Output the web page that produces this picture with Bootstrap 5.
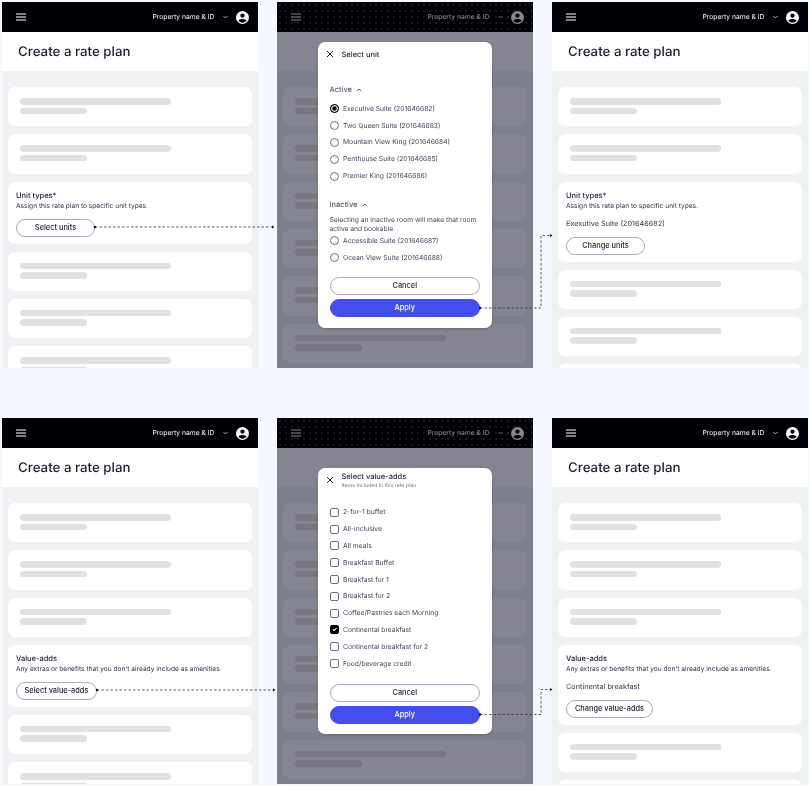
<!doctype html>
<html lang="en">
<head>
  <meta charset="utf-8" />
  <meta name="viewport" content="width=device-width, initial-scale=1" />
  <title>Create a rate plan</title>
  <link href="https://cdn.jsdelivr.net/npm/bootstrap@5.3.6/dist/css/bootstrap.min.css" rel="stylesheet" />
  <style>
    body {
      background-color: #f5f8fe;
      font-family: Inter, "Noto Sans", sans-serif;
      color: #24243a;
      overflow: hidden;
      text-rendering: geometricPrecision;
    }
    .board {
      position: relative;
      display: grid;
      grid-template-columns: repeat(3, 256px);
      grid-auto-rows: 366px;
      column-gap: 19px;
      row-gap: 50px;
      width: 809px;
      height: 786px;
      padding: 2px 0 0 2px;
      overflow: hidden;
      will-change: transform;
    }
    .screen {
      position: relative;
      background-color: #f0f1f3;
      overflow: hidden;
    }
    .topbar {
      height: 30px;
      padding: 0 9.5px 0 14px;
      background-color: #000006;
      color: #fff;
      font-size: 6.75px;
    }
    .topbar-off {
      background-image: radial-gradient(rgba(255, 255, 255, .3) .5px, transparent .8px);
      background-size: 6px 6px;
    }
    .topbar-off > * { opacity: .52; }
    .page-head {
      height: 39px;
      padding: 3px 0 0 16px;
      background-color: #fff;
      font-size: 13.3px;
      font-weight: 500;
      color: #1b1b2d;
    }
    .stack {
      padding: 16px 6px 0;
      gap: 8px;
    }
    .tile {
      border-radius: 7px;
      background-color: #fff;
      flex-shrink: 0;
    }
    .tile-skel {
      height: 39.33px;
      padding: 11px 12px;
      gap: 3px;
    }
    .bar-long, .bar-short {
      height: 6.5px;
      border-radius: 4px;
      background-color: #e1e1e2;
    }
    .bar-long { width: 151px; }
    .bar-short { width: 67px; }
    .tile-form { padding: 8px 8px 7px; }
    .tile-short { height: 62px; }
    .field-name { font-size: 7.5px; font-weight: 500; line-height: 11px; }
    .field-help { font-size: 6.6px; line-height: 10px; margin: .5px 0 7.5px; color: #34344a; }
    .field-value { font-size: 7.3px; line-height: 10px; margin-bottom: 8px; color: #34344a; }
    .pill {
      display: flex;
      align-items: center;
      justify-content: center;
      height: 18px;
      padding: 0;
      border: 1px solid #aaa8bc;
      border-radius: 9px;
      background-color: #fff;
      color: #1e1e30;
      font-size: 7.4px;
      font-weight: 500;
    }
    .pill-apply {
      border-color: #434ef0;
      background-color: #434ef0;
      color: #fff;
    }
    .w-units { width: 79px; }
    .w-value { width: 81px; }
    .w-change { width: 87px; }
    .dim {
      position: absolute;
      inset: 30px 0 0;
      background-color: rgba(30, 30, 52, .54);
    }
    .sheet {
      position: absolute;
      left: 41px;
      width: 173.5px;
      padding: 0 11.5px;
      border-radius: 7px;
      background-color: #fff;
      color: #45455a;
      box-shadow: 0 1px 3px rgba(0, 0, 0, .2);
    }
    .sheet-units { top: 40px; height: 286px; }
    .sheet-adds { top: 50px; height: 266px; }
    .sheet-head {
      position: relative;
      margin-left: 12px;
      font-size: 7.5px;
      font-weight: 500;
      color: #2a2a3e;
    }
    .sheet-units .sheet-head { padding-top: 7px; height: 42px; line-height: 11px; }
    .sheet-adds .sheet-head { padding-top: 3px; height: 36px; line-height: 11.5px; }
    .sheet-sub { font-size: 5.2px; font-weight: 400; line-height: 7px; color: #6d6d7e; }
    .x-mark {
      position: absolute;
      left: -16px;
      width: 8px;
      height: 8px;
    }
    .sheet-units .x-mark { top: 8px; }
    .sheet-adds .x-mark { top: 7.5px; }
    .group-label {
      height: 11px;
      line-height: 11px;
      margin-bottom: 5.5px;
      font-size: 7.6px;
      gap: 4px;
    }
    .group-gap { margin-top: 15px; }
    .group-note { font-size: 6.7px; line-height: 8.7px; margin: 0 0 -1px; width: 150px; }
    .choice {
      height: 16.8px;
      gap: 4.5px;
      font-size: 6.75px;
    }
    .choice .form-check-input {
      width: 9px;
      height: 9px;
      margin: 0;
      flex-shrink: 0;
      border: 1px solid #6f6e85;
      background-color: #fff;
      box-shadow: none;
    }
    .choice input[type=checkbox] { border-radius: 2px; }
    .choice .form-check-input:checked {
      border-color: #000006;
      background-color: #000006;
    }
    .choice input[type=radio]:checked {
      background-color: #000006;
      background-image: none;
      box-shadow: inset 0 0 0 1.2px #fff;
    }
    .sheet-actions {
      position: absolute;
      left: 11.5px;
      right: 11.5px;
      gap: 4px;
    }
    .sheet-units .sheet-actions { top: 235px; }
    .sheet-adds .sheet-actions { top: 216px; }
    .wires {
      position: absolute;
      inset: 0;
      pointer-events: none;
    }
  </style>
</head>
<body>
  <div class="board">

    <!-- baris atas: unit -->
    <section class="screen">
      <div class="topbar d-flex align-items-center">
        <svg width="10" height="8" viewBox="0 0 10 8"><path d="M0 1h10M0 4h10M0 7h10" stroke="#fff" stroke-width="1"/></svg>
        <span class="ms-auto">Property name &amp; ID</span>
        <svg class="ms-2" width="5" height="4" viewBox="0 0 5 4"><path d="M.5 1l2 2 2-2" fill="none" stroke="#fff" stroke-width=".7"/></svg>
        <svg class="ms-2" width="13" height="13" viewBox="0 0 24 24"><path fill="#fff" d="M12 0a12 12 0 1 0 0 24 12 12 0 0 0 0-24zm0 4.500a4 4 0 1 1 0 8 4 4 0 0 1 0-8zm0 17c-3.200 0-6-1.500-7.700-3.900C5.300 15.700 9 14.600 12 14.600s6.700 1.100 7.700 3c-1.700 2.400-4.500 3.900-7.700 3.900z"/></svg>
      </div>
      <div class="page-head d-flex align-items-center">Create a rate plan</div>
      <div class="stack d-flex flex-column">
        <div class="tile tile-skel d-flex flex-column"><div class="bar-long"></div><div class="bar-short"></div></div>
        <div class="tile tile-skel d-flex flex-column"><div class="bar-long"></div><div class="bar-short"></div></div>
        <div class="tile tile-form tile-short">
          <div class="field-name">Unit types*</div>
          <div class="field-help">Assign this rate plan to specific unit types.</div>
          <button class="pill w-units" type="button">Select units</button>
        </div>
        <div class="tile tile-skel d-flex flex-column"><div class="bar-long"></div><div class="bar-short"></div></div>
        <div class="tile tile-skel d-flex flex-column"><div class="bar-long"></div><div class="bar-short"></div></div>
        <div class="tile tile-skel d-flex flex-column"><div class="bar-long"></div><div class="bar-short"></div></div>
      </div>
    </section>

    <section class="screen">
      <div class="topbar topbar-off d-flex align-items-center">
        <svg width="10" height="8" viewBox="0 0 10 8"><path d="M0 1h10M0 4h10M0 7h10" stroke="#fff" stroke-width="1"/></svg>
        <span class="ms-auto">Property name &amp; ID</span>
        <svg class="ms-2" width="5" height="4" viewBox="0 0 5 4"><path d="M.5 1l2 2 2-2" fill="none" stroke="#fff" stroke-width=".7"/></svg>
        <svg class="ms-2" width="13" height="13" viewBox="0 0 24 24"><path fill="#fff" d="M12 0a12 12 0 1 0 0 24 12 12 0 0 0 0-24zm0 4.500a4 4 0 1 1 0 8 4 4 0 0 1 0-8zm0 17c-3.200 0-6-1.500-7.700-3.900C5.300 15.700 9 14.600 12 14.600s6.700 1.100 7.700 3c-1.700 2.400-4.500 3.900-7.700 3.900z"/></svg>
      </div>
      <div class="page-head"></div>
      <div class="stack d-flex flex-column">
        <div class="tile tile-skel d-flex flex-column"><div class="bar-long"></div><div class="bar-short"></div></div>
        <div class="tile tile-skel d-flex flex-column"><div class="bar-long"></div><div class="bar-short"></div></div>
        <div class="tile tile-skel d-flex flex-column"><div class="bar-long"></div><div class="bar-short"></div></div>
        <div class="tile tile-skel d-flex flex-column"><div class="bar-long"></div><div class="bar-short"></div></div>
        <div class="tile tile-skel d-flex flex-column"><div class="bar-long"></div><div class="bar-short"></div></div>
        <div class="tile tile-skel d-flex flex-column"><div class="bar-long"></div><div class="bar-short"></div></div>
      </div>
      <div class="dim"></div>
      <div class="sheet sheet-units">
        <div class="sheet-head">
          <svg class="x-mark" viewBox="0 0 8 8"><path d="M1 1l6 6M7 1L1 7" stroke="#1e1e30" stroke-width="1"/></svg>
          Select unit
        </div>
        <div class="group-label d-flex align-items-center">Active
          <svg width="6" height="4" viewBox="0 0 6 4"><path d="M.8 3l2.200-2 2.200 2" fill="none" stroke="#34344a" stroke-width=".8"/></svg>
        </div>
        <label class="choice d-flex align-items-center"><input class="form-check-input" type="radio" name="u" checked />Executive Suite (201646682)</label>
        <label class="choice d-flex align-items-center"><input class="form-check-input" type="radio" name="u" />Two Queen Suite (201646683)</label>
        <label class="choice d-flex align-items-center"><input class="form-check-input" type="radio" name="u" />Mountain View King (201646684)</label>
        <label class="choice d-flex align-items-center"><input class="form-check-input" type="radio" name="u" />Penthouse Suite (201646685)</label>
        <label class="choice d-flex align-items-center"><input class="form-check-input" type="radio" name="u" />Premier King (201646686)</label>
        <div class="group-label group-gap d-flex align-items-center">Inactive
          <svg width="6" height="4" viewBox="0 0 6 4"><path d="M.8 3l2.200-2 2.200 2" fill="none" stroke="#34344a" stroke-width=".8"/></svg>
        </div>
        <p class="group-note">Selecting an inactive room will make that room active and bookable.</p>
        <label class="choice d-flex align-items-center"><input class="form-check-input" type="radio" name="u" />Accessible Suite (201646687)</label>
        <label class="choice d-flex align-items-center"><input class="form-check-input" type="radio" name="u" />Ocean View Suite (201646688)</label>
        <div class="sheet-actions d-flex flex-column">
          <button class="pill" type="button">Cancel</button>
          <button class="pill pill-apply" type="button">Apply</button>
        </div>
      </div>
    </section>

    <section class="screen">
      <div class="topbar d-flex align-items-center">
        <svg width="10" height="8" viewBox="0 0 10 8"><path d="M0 1h10M0 4h10M0 7h10" stroke="#fff" stroke-width="1"/></svg>
        <span class="ms-auto">Property name &amp; ID</span>
        <svg class="ms-2" width="5" height="4" viewBox="0 0 5 4"><path d="M.5 1l2 2 2-2" fill="none" stroke="#fff" stroke-width=".7"/></svg>
        <svg class="ms-2" width="13" height="13" viewBox="0 0 24 24"><path fill="#fff" d="M12 0a12 12 0 1 0 0 24 12 12 0 0 0 0-24zm0 4.500a4 4 0 1 1 0 8 4 4 0 0 1 0-8zm0 17c-3.200 0-6-1.500-7.700-3.900C5.300 15.700 9 14.600 12 14.600s6.700 1.100 7.700 3c-1.700 2.400-4.500 3.900-7.700 3.900z"/></svg>
      </div>
      <div class="page-head d-flex align-items-center">Create a rate plan</div>
      <div class="stack d-flex flex-column">
        <div class="tile tile-skel d-flex flex-column"><div class="bar-long"></div><div class="bar-short"></div></div>
        <div class="tile tile-skel d-flex flex-column"><div class="bar-long"></div><div class="bar-short"></div></div>
        <div class="tile tile-form">
          <div class="field-name">Unit types*</div>
          <div class="field-help">Assign this rate plan to specific unit types.</div>
          <div class="field-value">Exexutive Suite (201646682)</div>
          <button class="pill w-units" type="button">Change units</button>
        </div>
        <div class="tile tile-skel d-flex flex-column"><div class="bar-long"></div><div class="bar-short"></div></div>
        <div class="tile tile-skel d-flex flex-column"><div class="bar-long"></div><div class="bar-short"></div></div>
        <div class="tile tile-skel d-flex flex-column"><div class="bar-long"></div><div class="bar-short"></div></div>
      </div>
    </section>

    <!-- baris bawah: value-adds -->
    <section class="screen">
      <div class="topbar d-flex align-items-center">
        <svg width="10" height="8" viewBox="0 0 10 8"><path d="M0 1h10M0 4h10M0 7h10" stroke="#fff" stroke-width="1"/></svg>
        <span class="ms-auto">Property name &amp; ID</span>
        <svg class="ms-2" width="5" height="4" viewBox="0 0 5 4"><path d="M.5 1l2 2 2-2" fill="none" stroke="#fff" stroke-width=".7"/></svg>
        <svg class="ms-2" width="13" height="13" viewBox="0 0 24 24"><path fill="#fff" d="M12 0a12 12 0 1 0 0 24 12 12 0 0 0 0-24zm0 4.500a4 4 0 1 1 0 8 4 4 0 0 1 0-8zm0 17c-3.200 0-6-1.500-7.700-3.900C5.300 15.700 9 14.600 12 14.600s6.700 1.100 7.700 3c-1.700 2.400-4.500 3.900-7.700 3.900z"/></svg>
      </div>
      <div class="page-head d-flex align-items-center">Create a rate plan</div>
      <div class="stack d-flex flex-column">
        <div class="tile tile-skel d-flex flex-column"><div class="bar-long"></div><div class="bar-short"></div></div>
        <div class="tile tile-skel d-flex flex-column"><div class="bar-long"></div><div class="bar-short"></div></div>
        <div class="tile tile-skel d-flex flex-column"><div class="bar-long"></div><div class="bar-short"></div></div>
        <div class="tile tile-form tile-short">
          <div class="field-name">Value-adds</div>
          <div class="field-help">Any extras or benefits that you don't already include as amenities.</div>
          <button class="pill w-value" type="button">Select value-adds</button>
        </div>
        <div class="tile tile-skel d-flex flex-column"><div class="bar-long"></div><div class="bar-short"></div></div>
        <div class="tile tile-skel d-flex flex-column"><div class="bar-long"></div><div class="bar-short"></div></div>
      </div>
    </section>

    <section class="screen">
      <div class="topbar topbar-off d-flex align-items-center">
        <svg width="10" height="8" viewBox="0 0 10 8"><path d="M0 1h10M0 4h10M0 7h10" stroke="#fff" stroke-width="1"/></svg>
        <span class="ms-auto">Property name &amp; ID</span>
        <svg class="ms-2" width="5" height="4" viewBox="0 0 5 4"><path d="M.5 1l2 2 2-2" fill="none" stroke="#fff" stroke-width=".7"/></svg>
        <svg class="ms-2" width="13" height="13" viewBox="0 0 24 24"><path fill="#fff" d="M12 0a12 12 0 1 0 0 24 12 12 0 0 0 0-24zm0 4.500a4 4 0 1 1 0 8 4 4 0 0 1 0-8zm0 17c-3.200 0-6-1.500-7.700-3.900C5.300 15.700 9 14.600 12 14.600s6.700 1.100 7.700 3c-1.700 2.400-4.500 3.900-7.700 3.900z"/></svg>
      </div>
      <div class="page-head"></div>
      <div class="stack d-flex flex-column">
        <div class="tile tile-skel d-flex flex-column"><div class="bar-long"></div><div class="bar-short"></div></div>
        <div class="tile tile-skel d-flex flex-column"><div class="bar-long"></div><div class="bar-short"></div></div>
        <div class="tile tile-skel d-flex flex-column"><div class="bar-long"></div><div class="bar-short"></div></div>
        <div class="tile tile-skel d-flex flex-column"><div class="bar-long"></div><div class="bar-short"></div></div>
        <div class="tile tile-skel d-flex flex-column"><div class="bar-long"></div><div class="bar-short"></div></div>
        <div class="tile tile-skel d-flex flex-column"><div class="bar-long"></div><div class="bar-short"></div></div>
      </div>
      <div class="dim"></div>
      <div class="sheet sheet-adds">
        <div class="sheet-head">
          <svg class="x-mark" viewBox="0 0 8 8"><path d="M1 1l6 6M7 1L1 7" stroke="#1e1e30" stroke-width="1"/></svg>
          Select value-adds
          <div class="sheet-sub">Items included in this rate plan</div>
        </div>
        <label class="choice d-flex align-items-center"><input class="form-check-input" type="checkbox" />2-for-1 buffet</label>
        <label class="choice d-flex align-items-center"><input class="form-check-input" type="checkbox" />All-inclusive</label>
        <label class="choice d-flex align-items-center"><input class="form-check-input" type="checkbox" />All meals</label>
        <label class="choice d-flex align-items-center"><input class="form-check-input" type="checkbox" />Breakfast Buffet</label>
        <label class="choice d-flex align-items-center"><input class="form-check-input" type="checkbox" />Breakfast for 1</label>
        <label class="choice d-flex align-items-center"><input class="form-check-input" type="checkbox" />Breakfast for 2</label>
        <label class="choice d-flex align-items-center"><input class="form-check-input" type="checkbox" />Coffee/Pastries each Morning</label>
        <label class="choice d-flex align-items-center"><input class="form-check-input" type="checkbox" checked />Continental breakfast</label>
        <label class="choice d-flex align-items-center"><input class="form-check-input" type="checkbox" />Continental breakfast for 2</label>
        <label class="choice d-flex align-items-center"><input class="form-check-input" type="checkbox" />Food/beverage credit</label>
        <div class="sheet-actions d-flex flex-column">
          <button class="pill" type="button">Cancel</button>
          <button class="pill pill-apply" type="button">Apply</button>
        </div>
      </div>
    </section>

    <section class="screen">
      <div class="topbar d-flex align-items-center">
        <svg width="10" height="8" viewBox="0 0 10 8"><path d="M0 1h10M0 4h10M0 7h10" stroke="#fff" stroke-width="1"/></svg>
        <span class="ms-auto">Property name &amp; ID</span>
        <svg class="ms-2" width="5" height="4" viewBox="0 0 5 4"><path d="M.5 1l2 2 2-2" fill="none" stroke="#fff" stroke-width=".7"/></svg>
        <svg class="ms-2" width="13" height="13" viewBox="0 0 24 24"><path fill="#fff" d="M12 0a12 12 0 1 0 0 24 12 12 0 0 0 0-24zm0 4.500a4 4 0 1 1 0 8 4 4 0 0 1 0-8zm0 17c-3.200 0-6-1.500-7.700-3.900C5.300 15.700 9 14.600 12 14.600s6.700 1.100 7.700 3c-1.700 2.400-4.500 3.900-7.700 3.900z"/></svg>
      </div>
      <div class="page-head d-flex align-items-center">Create a rate plan</div>
      <div class="stack d-flex flex-column">
        <div class="tile tile-skel d-flex flex-column"><div class="bar-long"></div><div class="bar-short"></div></div>
        <div class="tile tile-skel d-flex flex-column"><div class="bar-long"></div><div class="bar-short"></div></div>
        <div class="tile tile-skel d-flex flex-column"><div class="bar-long"></div><div class="bar-short"></div></div>
        <div class="tile tile-form">
          <div class="field-name">Value-adds</div>
          <div class="field-help">Any extras or benefits that you don't already include as amenities.</div>
          <div class="field-value">Continental breakfast</div>
          <button class="pill w-change" type="button">Change value-adds</button>
        </div>
        <div class="tile tile-skel d-flex flex-column"><div class="bar-long"></div><div class="bar-short"></div></div>
        <div class="tile tile-skel d-flex flex-column"><div class="bar-long"></div><div class="bar-short"></div></div>
      </div>
    </section>

    <!-- garis penghubung antar layar -->
    <svg class="wires" width="809" height="786" viewBox="0 0 809 786">
      <g fill="none" stroke="#33334a" stroke-width=".8" stroke-dasharray="2.500 2">
        <path d="M95 227H272"/>
        <path d="M480 308H541V235.500H550"/>
        <path d="M97 690H273"/>
        <path d="M480 714.500H541V689.500H550"/>
      </g>
      <g fill="#101020">
        <circle cx="95" cy="227" r="1.200"/><path d="M272 225.500l2.500 1.500-2.500 1.500z"/>
        <circle cx="480" cy="308" r="1.200"/><path d="M550 234l2.500 1.500-2.500 1.500z"/>
        <circle cx="97" cy="690" r="1.200"/><path d="M273 688.500l2.500 1.500-2.500 1.500z"/>
        <circle cx="480" cy="714.500" r="1.200"/><path d="M550 688l2.500 1.500-2.500 1.500z"/>
      </g>
    </svg>
  </div>

  <script src="https://cdn.jsdelivr.net/npm/bootstrap@5.3.6/dist/js/bootstrap.bundle.min.js"></script>
</body>
</html>
